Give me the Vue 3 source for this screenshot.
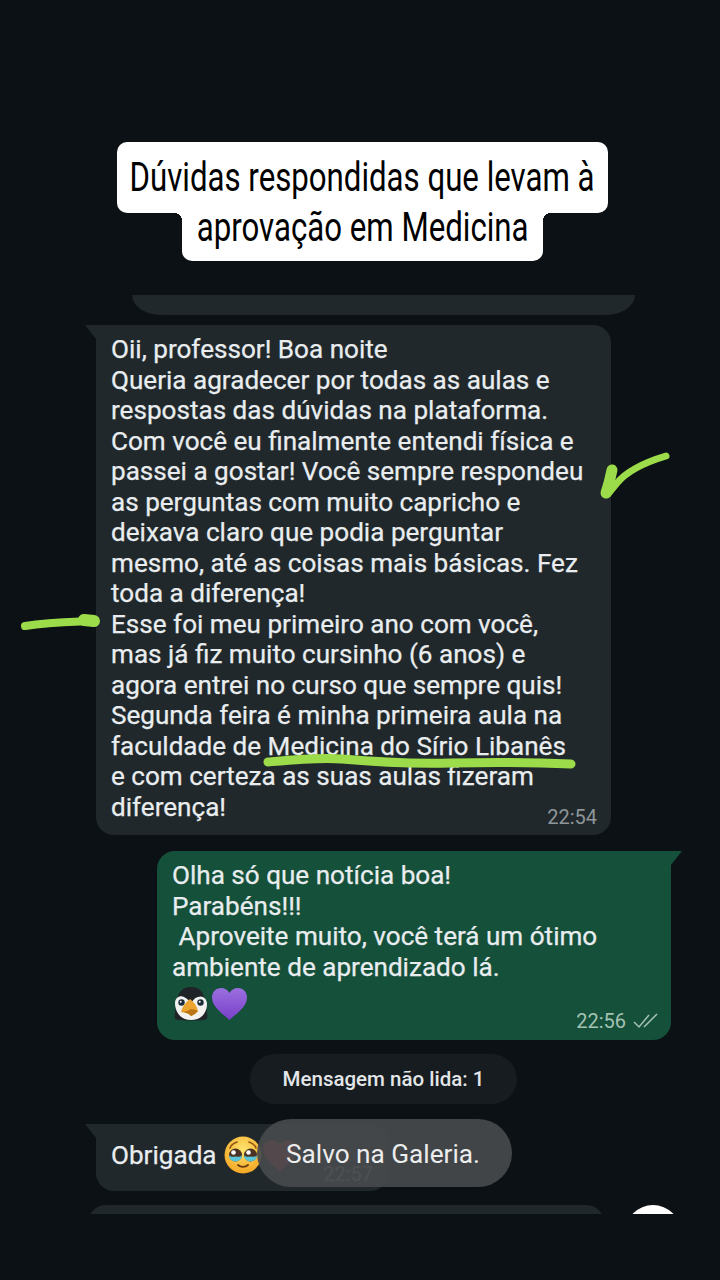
<script setup>
const firstMessage = [
  "Oii, professor! Boa noite",
  "Queria agradecer por todas as aulas e",
  "respostas das dúvidas na plataforma.",
  "Com você eu finalmente entendi física e",
  "passei a gostar! Você sempre respondeu",
  "as perguntas com muito capricho e",
  "deixava claro que podia perguntar",
  "mesmo, até as coisas mais básicas. Fez",
  "toda a diferença!",
  "Esse foi meu primeiro ano com você,",
  "mas já fiz muito cursinho (6 anos) e",
  "agora entrei no curso que sempre quis!",
  "Segunda feira é minha primeira aula na",
  "faculdade de Medicina do Sírio Libanês",
  "e com certeza as suas aulas fizeram",
  "diferença!",
]

const replyMessage = [
  "Olha só que notícia boa!",
  "Parabéns!!!",
  " Aproveite muito, você terá um ótimo",
  "ambiente de aprendizado lá.",
]
</script>

<template>
  <div class="story">
    <header class="title">
      <div class="title__line title__line--top"><span class="title__text">Dúvidas respondidas que levam à</span></div>
      <div class="title__line title__line--bottom"><span class="title__text">aprovação em Medicina</span></div>
    </header>

    <main class="chat">
      <div class="sliver"></div>

      <div class="bubble bubble--in bubble--long">
        <div v-for="line in firstMessage" :key="line" class="bubble__line">{{ line }}</div>
        <span class="bubble__time">22:54</span>
      </div>

      <div class="bubble bubble--out">
        <div v-for="line in replyMessage" :key="line" class="bubble__line">{{ line }}</div>
        <div class="emoji-row">
          <svg width="34" height="34" viewBox="0 0 34 34">
            <path d="M17 0C8 0 4 6 3 14 2 20 0 28 1 32c3 2 29 2 32 0 1-5-1-12-2-18C30 6 26 0 17 0z" fill="#1f2227" />
            <path d="M1 16c0-5 5-8 9-6 4 2 5 4 7 6 2-2 3-5 7-6 4-2 9 1 9 7 0 8-5 16-16 16S1 24 1 16z" fill="#f1f1ef" />
            <circle cx="7.500" cy="15.500" r="3.200" fill="#1d2c38" />
            <circle cx="26.500" cy="15.500" r="3.200" fill="#1d2c38" />
            <circle cx="6.700" cy="14.700" r="1" fill="#fff" />
            <circle cx="25.700" cy="14.700" r="1" fill="#fff" />
            <path d="M16 12c-4 3-8 8-9 13 4 0 7 1 10 4 3-1 5-3 7-5-1-5-4-9-8-12z" fill="#eda52f" />
            <path d="M7 25c4 0 7-1 10-3 2 0 5 1 7 2-2 2-4 4-7 5-3-3-6-4-10-4z" fill="#bb7415" />
          </svg>
          <svg width="37" height="34" viewBox="0 0 37 34">
            <defs>
              <linearGradient id="purple" x1="0" y1="0" x2="0" y2="1">
                <stop offset="0" stop-color="#9a6fe0" />
                <stop offset="1" stop-color="#7a3fc8" />
              </linearGradient>
            </defs>
            <path d="M18.500 33C12 27 1 20 1 10.500 1 5 5 1 10 1c4 0 7 2 8.500 5C20 3 23 1 27 1c5 0 9 4 9 9.500C36 20 25 27 18.500 33z" fill="url(#purple)" />
          </svg>
        </div>
        <span class="bubble__time bubble__time--out">
          22:56
          <svg width="25" height="16" viewBox="0 0 25 16" fill="none" stroke="#a3c2b3" stroke-width="1.500">
            <path d="M1 9l5 5L16 2" />
            <path d="M11 14L24 1" />
          </svg>
        </span>
      </div>

      <div class="unread">Mensagem não lida: 1</div>

      <div class="bubble bubble--in bubble--short">
        <div class="thanks">
          <span>Obrigada</span>
          <svg class="thanks__face" width="38" height="38" viewBox="0 0 38 38">
            <defs>
              <radialGradient id="face" cx="0.5" cy="0.35" r="0.7">
                <stop offset="0" stop-color="#fde46e" />
                <stop offset="1" stop-color="#f4a21f" />
              </radialGradient>
            </defs>
            <circle cx="19" cy="19" r="18.500" fill="url(#face)" />
            <path d="M6 12c1-3 4-5 7-6M32 12c-1-3-4-5-7-6" stroke="#8f5412" stroke-width="1.600" fill="none" stroke-linecap="round" />
            <circle cx="11.500" cy="19" r="6.500" fill="#4a3324" />
            <circle cx="26.500" cy="19" r="6.500" fill="#4a3324" />
            <path d="M5 19.500a6.500 6 0 0 0 13 0c-3 2-4 1-6.500 1S8 21.500 5 19.500zM20 19.500a6.500 6 0 0 0 13 0c-3 2-4 1-6.500 1S23 21.500 20 19.500z" fill="#58c6d8" />
            <circle cx="9.500" cy="16.500" r="2.300" fill="#fff" />
            <circle cx="24.500" cy="16.500" r="2.300" fill="#fff" />
            <path d="M14 29c2.500 2.500 7.500 2.500 10 0" stroke="#6b3d10" stroke-width="1.800" fill="none" stroke-linecap="round" />
          </svg>
          <svg class="thanks__heart" width="36" height="33" viewBox="0 0 37 34">
            <path d="M18.500 33C12 27 1 20 1 10.500 1 5 5 1 10 1c4 0 7 2 8.500 5C20 3 23 1 27 1c5 0 9 4 9 9.500C36 20 25 27 18.500 33z" fill="#d8423f" />
          </svg>
        </div>
        <span class="bubble__time">22:57</span>
      </div>

      <div class="next-row">
        <div class="next-row__bubble"></div>
        <div class="next-row__fab"></div>
      </div>
    </main>

    <div class="toast">Salvo na Galeria.</div>

    <svg class="marks" width="720" height="1280" viewBox="0 0 720 1280" fill="none" stroke="#9cdc4a" stroke-linecap="round" stroke-linejoin="round">
      <path d="M666 456C646 462 628 470 617 483L608 494" stroke-width="7" />
      <path d="M612 470C610 480 608 487 606 493" stroke-width="11" />
      <path d="M25 626C50 622 70 622 93 621" stroke-width="8" />
      <path d="M84 620L94 621" stroke-width="12" />
      <path d="M268 762C290 760 320 757 342 759S400 764 450 763 530 762 571 764" stroke-width="9" />
    </svg>
  </div>
</template>

<style>
body {
  background: #0b1114;
}
</style>

<style scoped>
.story {
  position: relative;
  width: 720px;
  height: 1280px;
  overflow: hidden;
  background: #0b1114;
  font-family: Roboto, sans-serif;
  color: #e9edef;
}

.title {
  display: flex;
  flex-direction: column;
  align-items: center;
  padding: 142px 0 0 5px;
  font-size: 40px;
  color: #000;
}

.title__line {
  position: relative;
  display: flex;
  justify-content: center;
  background: #fff;
  white-space: nowrap;
}

.title__text {
  flex: none;
  display: inline-block;
  transform: scaleX(0.78);
}

.title__line--top {
  width: 491px;
  height: 71px;
  line-height: 71px;
  border-radius: 10px;
}

.title__line--bottom {
  width: 361px;
  height: 48px;
  line-height: 30px;
  border-radius: 0 0 10px 10px;
}

.title__line--bottom::before,
.title__line--bottom::after {
  content: "";
  position: absolute;
  top: 0;
  width: 8px;
  height: 8px;
}

.title__line--bottom::before {
  left: -8px;
  background: radial-gradient(circle at 0 100%, transparent 8px, #fff 8px);
}

.title__line--bottom::after {
  right: -8px;
  background: radial-gradient(circle at 100% 100%, transparent 8px, #fff 8px);
}

.chat {
  display: flex;
  flex-direction: column;
  height: 919px;
  margin-top: 34px;
  overflow: hidden;
}

.sliver {
  flex: none;
  width: 503px;
  height: 20px;
  margin-left: 132px;
  background: #20282b;
  border-radius: 0 0 30px 30px / 0 0 20px 20px;
}

.bubble {
  position: relative;
  flex: none;
  display: flex;
  flex-direction: column;
  box-sizing: border-box;
  font-size: 26.1px;
  line-height: 30.5px;
  -webkit-text-stroke: 0.25px;
}

.bubble::before {
  content: "";
  position: absolute;
  top: 0;
  width: 24px;
  height: 14px;
  background: inherit;
}

.bubble--in {
  margin-left: 96px;
  padding: 9px 14px 8px 15px;
  background: #20282b;
  border-radius: 0 18px 18px 18px;
}

.bubble--in::before {
  left: -11px;
  clip-path: polygon(0 0, 100% 0, 100% 100%, 46% 100%);
}

.bubble--long {
  width: 515px;
  margin-top: 10px;
}

.bubble--out {
  width: 514px;
  margin: 16px 0 0 157px;
  padding: 9px 14px 9px 15px;
  background: #15503a;
  border-radius: 18px 0 18px 18px;
}

.bubble--out::before {
  right: -11px;
  clip-path: polygon(0 0, 100% 0, 54% 100%, 0 100%);
}

.bubble--short {
  width: 292px;
  height: 67px;
  margin-top: 20px;
}

.bubble__line {
  white-space: pre;
}

.bubble__time {
  align-self: flex-end;
  margin-top: -15px;
  font-size: 20px;
  line-height: 20px;
  color: #8e9699;
  -webkit-text-stroke: 0;
}

.bubble__time--out {
  display: flex;
  align-items: center;
  gap: 7px;
  margin-top: -11px;
  margin-right: -1px;
  color: #a3c2b3;
}

.emoji-row {
  display: flex;
  align-items: center;
  gap: 3px;
  height: 36px;
  margin-top: 4px;
  margin-left: 2px;
}

.thanks {
  display: flex;
  align-items: center;
  height: 42px;
  margin-top: 3px;
}

.thanks__face {
  margin-left: 7px;
}

.bubble--short .bubble__time {
  margin-top: -10px;
  margin-right: 1px;
}

.unread {
  flex: none;
  align-self: flex-start;
  margin: 14px 0 0 250px;
  width: 267px;
  height: 50px;
  border-radius: 25px;
  background: #161c1f;
  font-size: 20.5px;
  font-weight: 500;
  line-height: 50px;
  text-align: center;
  color: #e3e6e8;
}

.next-row {
  flex: none;
  display: flex;
  margin-top: 14px;
  margin-left: 88px;
}

.next-row__bubble {
  width: 516px;
  height: 40px;
  background: #20282b;
  border-radius: 18px;
}

.next-row__fab {
  width: 56px;
  height: 56px;
  margin: 0 0 0 21px;
  border-radius: 50%;
  background: #fff;
}

.toast {
  position: absolute;
  left: 257px;
  top: 1119px;
  box-sizing: border-box;
  width: 255px;
  height: 68px;
  padding-right: 3px;
  border-radius: 34px;
  background: rgba(72, 74, 77, 0.92);
  font-size: 26.2px;
  line-height: 71px;
  text-align: center;
  color: #eceded;
}

.marks {
  position: absolute;
  left: 0;
  top: 0;
  pointer-events: none;
}
</style>
